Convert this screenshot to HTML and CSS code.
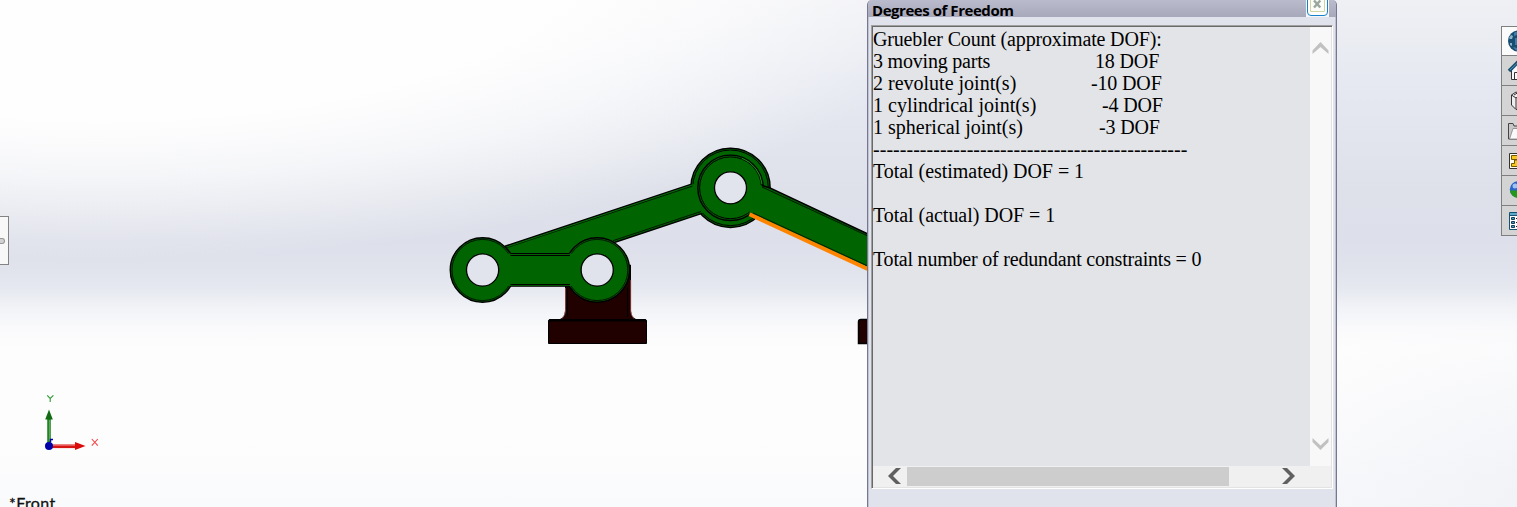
FILE: index.html
```html
<!DOCTYPE html>
<html lang="en">
<head>
<meta charset="utf-8">
<title>Degrees of Freedom</title>
<link rel="stylesheet" href="styles.css">
</head>
<body>
<main class="viewport">
  <svg class="scene" width="1517" height="507" viewBox="0 0 1517 507">
    <!-- base bracket -->
    <path d="M565.5 280V311Q565 318 560 319.5H636Q631 318 630.5 311V265Z" fill="#210000" stroke="#000"/>
    <path d="M565.5 288V311Q565 316 562 318M630.7 280V311Q631 316 634 318" fill="none" stroke="#a64f4f" stroke-width=".8"/>
    <path d="M567.5 287V317M627.5 287V317" stroke="#000" fill="none"/>
    <path d="M548.5 343.5V321Q548.5 319.5 550 319.5H645Q646.5 319.5 646.5 321V343.5Z" fill="#210000" stroke="#000"/>
    <path d="M549 320.5H646" stroke="#000" stroke-width="2"/>
    <path d="M858.5 343.5V322Q858.5 319.5 861 319.5H900V343.5Z" fill="#210000" stroke="#000" stroke-width="1.5"/>
    <!-- coupler arm -->
    <circle cx="730.5" cy="187.8" r="39.6" fill="#006400" stroke="#000" stroke-width="1.5"/>
    <circle cx="730.5" cy="187.8" r="37.8" fill="none" stroke="#000"/>
    <path d="M505 246.3L691.5 184.5L700 183L706 211.8L702 213.3L615 242L596 270H505Z" fill="#006400"/>
    <path d="M505 246.3L691.5 184.2M615 242.3L702 213.4" fill="none" stroke="#000" stroke-width="1.5"/>
    <path d="M505 248.2L692.5 186M613 240.7L701 211.5" fill="none" stroke="#000" stroke-width=".8"/>
    <path d="M506 247.3L692 185" stroke="#087c08" stroke-width=".7"/>
    <!-- output arm -->
    <circle cx="730.5" cy="187.8" r="32.7" fill="#006400" stroke="#000" stroke-width="1.4"/>
    <circle cx="730.5" cy="187.8" r="30.9" fill="none" stroke="#000"/>
    <path d="M757 184L763 186L769 188L874 237V270L749 214Z" fill="#006400"/>
    <path d="M762 185.5L770 188L870 235" fill="none" stroke="#000" stroke-width="1.5"/>
    <path d="M762 187L870 237" fill="none" stroke="#000" stroke-width=".8"/>
    <path d="M742 158.2A31.8 31.8 0 0 1 762 184" fill="none" stroke="#16a316" stroke-width=".8"/>
    <circle cx="730.5" cy="187.8" r="16" fill="#e1e4ec" stroke="#000" stroke-width="1.3"/>
    <path d="M749.5 214.3L872 271" stroke="#ff8500" stroke-width="4"/>
    <path d="M753 213L870 267" stroke="#000" stroke-width=".7"/>
    <!-- crank -->
    <circle cx="482.6" cy="270" r="32.3" fill="#006400" stroke="#000" stroke-width="1.5"/>
    <circle cx="597.2" cy="270" r="32.3" fill="#006400" stroke="#000" stroke-width="1.5"/>
    <circle cx="482.6" cy="270" r="30.6" fill="none" stroke="#000" stroke-width=".8"/>
    <circle cx="597.2" cy="270" r="30.6" fill="none" stroke="#000" stroke-width=".8"/>
    <path d="M506 253.5H574V286H506Z" fill="#006400"/>
    <path d="M510.5 253.5H569.5M510.5 255.5H570M510.5 284.5H570M510.5 286.3H569.5" stroke="#000" stroke-width="1"/>
    <circle cx="482.6" cy="270" r="16.1" fill="#e1e4ed" stroke="#000" stroke-width="1.3"/>
    <circle cx="597.2" cy="270" r="16.1" fill="#e0e3ec" stroke="#000" stroke-width="1.3"/>
    <!-- axis triad -->
    <path d="M49 445V418" stroke="#248324" stroke-width="3.6"/><path d="M49.6 441V420" stroke="#5eae5e" stroke-width="1"/>
    <path d="M49 409.5L45.2 419.5H52.8Z" fill="#126b12"/>
    <path d="M51 446.3H77" stroke="#d61414" stroke-width="3.6"/><path d="M53 445.2H76" stroke="#ef7777" stroke-width="1"/>
    <path d="M85.5 446L75 442V450Z" fill="#d90b0b"/>
    <path d="M50.5 442V439.5H53" stroke="#0000ad" stroke-width="1.5" fill="none"/>
    <circle cx="49" cy="446" r="4" fill="#0000ab"/>
    <path d="M47.2 395.3L50.2 398.5L53.4 395.3M50.2 398.5V402" stroke="#2f9a2f" stroke-width="1.1" fill="none"/>
    <path d="M91.8 439L97.8 445.7M97.8 439L91.8 445.7" stroke="#f34545" stroke-width="1.1" fill="none"/>
  </svg>
  <div class="view-name">*Front</div>
  <div class="flyout"><span class="flyout-dot"></span></div>

  <section class="dialog">
    <header class="titlebar">
      <h1 class="title">Degrees of Freedom</h1>
      <svg class="close" width="23" height="17" viewBox="0 0 23 17"><path d="M0 0H23V17H0Z" fill="#f4f6fa"/><path d="M1.5 0V12Q1.5 15.5 5 15.5H18Q21.5 15.5 21.5 12V0" fill="#fff" stroke="#1683c9"/><path d="M4.5 0V11.5H18.5V0" fill="#fdfdf8" stroke="#d0d5a5"/><path d="M8 .5L14.3 7.5M14.3 .5L8 7.5" stroke="#9aa99f" stroke-width="2.5"/></svg>
    </header>
    <div class="report">
      <div class="report-main">
        <div class="report-text">
          <div class="heading">Gruebler Count (approximate DOF):</div>
          <div class="row"><span class="parts">3 moving parts</span><span class="v18">18 DOF</span></div>
          <div class="row"><span>2 revolute joint(s)</span><span class="v10">-10 DOF</span></div>
          <div class="row"><span>1 cylindrical joint(s)</span><span class="v4">-4 DOF</span></div>
          <div class="row"><span>1 spherical joint(s)</span><span class="v3">-3 DOF</span></div>
          <div class="rule">-----------------------------------------------</div>
          <div class="total">Total (estimated) DOF = 1</div>
          <br>
          <div class="total">Total (actual) DOF = 1</div>
          <br>
          <div class="redundant">Total number of redundant constraints = 0</div>
        </div>
        <div class="vscroll">
          <svg width="21" height="12" viewBox="0 0 21 12"><path d="M2.5 8.5L10.5 0L18.5 8.5V12L10.5 5L2.5 12Z" fill="#c1c1c1"/></svg>
          <svg width="21" height="12" viewBox="0 0 21 12"><path d="M2.5 0L10.5 7.5L18.5 0V4L10.5 12L2.5 4Z" fill="#c1c1c1"/></svg>
        </div>
      </div>
      <div class="hscroll">
        <svg width="34" height="21" viewBox="0 0 34 21"><path d="M15 10L23 2H28L20 10L28 18H23Z" fill="#606060"/></svg>
        <div class="thumb"></div>
        <svg class="next" width="20" height="21" viewBox="0 0 20 21"><path d="M0 2H5L13 10L5 18H0L8 10Z" fill="#606060"/></svg>
      </div>
    </div>
  </section>

  <nav class="taskpane">
    <div class="tab active"><svg width="15" height="28" viewBox="0 0 15 28"><circle cx="16.5" cy="14" r="10.5" fill="#174d70"/><path d="M7 11L9 8L11 9L10 12H8ZM8 16H10V19L8 18Z" fill="#8db4cb"/><path d="M12 6Q14 4 15 5V8L12 9ZM13 11H15V18H13ZM11 20L15 21V24Q12 22 11 20Z" fill="#3c7fa8"/></svg></div>
    <div class="tab"><svg width="15" height="29" viewBox="0 0 15 29"><path d="M9.5 14V23.5H20V9L15 6Z" fill="#f8f8f8" stroke="#333"/><path d="M12.5 23V16.5H17" fill="none" stroke="#333"/><path d="M7 15L17 5" stroke="#174f70" stroke-width="3.5"/><path d="M8 14L17 5.5" stroke="#5295bd"/></svg></div>
    <div class="tab"><svg width="15" height="29" viewBox="0 0 15 29"><path d="M9.5 9L14 6L20 9V23L14 23.5L9.5 19Z" fill="#eee" stroke="#333"/><path d="M9.5 9L14 12V23M14 12L18 9M12 9L17 6" fill="none" stroke="#333"/></svg></div>
    <div class="tab"><svg width="15" height="29" viewBox="0 0 15 29"><path d="M6.5 23V7.5H11L12 10H20V23Z" fill="#c8c8c8" stroke="#444"/><path d="M7.5 23L11 12.5H20V23Z" fill="#fafafa" stroke="#777" stroke-width=".7"/></svg></div>
    <div class="tab"><svg width="15" height="29" viewBox="0 0 15 29"><path d="M7.5 7.5H20V22.5H7.5Z" fill="#fffdf0" stroke="#333"/><path d="M9.5 9.5H17V13.5H9.5ZM9.5 17.5H12.5V14H17V20.5H9.5Z" fill="#f7c81c" stroke="#765800"/></svg></div>
    <div class="tab"><svg width="15" height="29" viewBox="0 0 15 29"><circle cx="16" cy="13.5" r="8.2" fill="#2866ca"/><path d="M8 14.5H16V22Q9 21 8 14.5Z" fill="#24981a"/><circle cx="13" cy="10" r="2.5" fill="#9fc3f2"/></svg></div>
    <div class="tab"><svg width="15" height="29" viewBox="0 0 15 29"><path d="M7.5 6.5H20V23.5H7.5Z" fill="#fff" stroke="#155170"/><path d="M8 8H15" stroke="#5da8ce" stroke-width="2"/><path d="M8 9.5H15" stroke="#155170"/><path d="M9.5 11.5H12.5V13.5H9.5ZM9.5 15.5H12.5V17.5H9.5ZM9.5 19.5H12.5V21.5H9.5Z" fill="#4b9bc4" stroke="#123f58"/><path d="M14 12.5H16M14 16.5H16M14 20.5H16" stroke="#222"/></svg></div>
  </nav>
</main>
</body>
</html>
```

FILE: styles.css
```css
* { box-sizing: border-box; }
body { margin: 0; overflow: hidden; }
svg { display: block; flex: none; }
.viewport {
  position: relative;
  width: 1517px;
  height: 507px;
  overflow: hidden;
  background:
    radial-gradient(ellipse 880px 300px at 100px -40px, #fefefe 0 53%, rgba(254,254,254,.7) 72%, rgba(254,254,254,0) 100%),
    radial-gradient(ellipse 420px 200px at 1600px 507px, #eff1f6, rgba(239,241,246,0)),
    linear-gradient(#eff0f4 0, #e6e9f1 80px, #dee1ea 190px, #dddfea 240px, #e0e3ec 268px, #e5e8ef 288px, #f1f3f7 308px, #fafafc 328px, #fdfdfd 350px, #fdfdfd 440px, #f9fafc 507px);
}
.scene { position: absolute; inset: 0; }
.view-name {
  position: absolute;
  left: 9px;
  top: 494px;
  font: 16px/18px Lato, sans-serif;
  letter-spacing: .4px;
  color: #111;
  -webkit-text-stroke: .3px #111;
}
.flyout {
  position: absolute;
  left: 0;
  top: 216px;
  width: 9px;
  height: 49px;
  border: 1px solid #838383;
  border-left: 0;
  background: #f8f8f8;
  display: flex;
  align-items: center;
}
.flyout-dot { width: 5px; height: 6px; border: 1px solid #969696; border-left: 0; border-radius: 0 3px 3px 0; background: #d2d2d2; }

.dialog {
  position: absolute;
  left: 867px;
  top: 0;
  width: 470px;
  height: 507px;
  padding: 0 3px;
  background: #e0e3eb;
  border: 1px solid #77778f;
  border-width: 0 1px;
  border-radius: 5px 5px 0 0;
  box-shadow: inset 1px 0 #bfc3d4, inset -1px 0 #bfc3d4;
}
.titlebar {
  display: flex;
  justify-content: space-between;
  height: 17px;
  margin: 0 -3px 8px;
  padding: 0 7px 0 4px;
  background: linear-gradient(#bbbbce, #a8a8bb);
  border-radius: 5px 5px 0 0;
}
.title { margin: 0; font: 700 15px/21px "Open Sans", sans-serif; color: #000; letter-spacing: -.45px; white-space: nowrap; }
.report {
  width: 462px;
  height: 464px;
  border: 1px solid #fff;
  border-top-color: #a0a0a0;
  border-left-color: #a0a0a0;
  box-shadow: inset 1px 1px #696969, inset -1px -1px #e3e3e3;
  padding: 1px;
  background: #e2e4e7;
}
.report-main { display: flex; height: 439px; }
.report-text {
  flex: 1;
  padding-top: 1px;
  font: 20px/22px "Liberation Serif", serif;
  color: #000;
  white-space: nowrap;
}
.heading { letter-spacing: -.16px; }
.row { display: grid; grid-template-columns: 218px auto; }
.parts { letter-spacing: -.2px; }
.total { letter-spacing: -.04px; }
.redundant { letter-spacing: -.2px; }
.rule { letter-spacing: .03px; }
.v18, .v10, .v4, .v3 { letter-spacing: -.15px; }
.v18 { padding-left: 4px; }
.v4 { padding-left: 11px; }
.v3 { padding-left: 8px; }
.vscroll { width: 21px; padding: 15px 0 16px; background: #f8f8f8; display: flex; flex-direction: column; justify-content: space-between; }
.hscroll { display: flex; height: 21px; background: #f0f0f0; }
.thumb { width: 322px; height: 19px; margin: 1px 0; background: #cdcdcd; }
.next { margin-left: 53px; }

.taskpane { position: absolute; left: 1501px; top: 26px; width: 16px; border: 1px solid #7f7f7f; border-width: 1px 0 1px 1px; }
.tab { height: 30px; background: #d4d4d4; border-top: 1px solid #7f7f7f; }
.tab.active { height: 28px; background: #fbfbfb; border-top: 0; }
```
